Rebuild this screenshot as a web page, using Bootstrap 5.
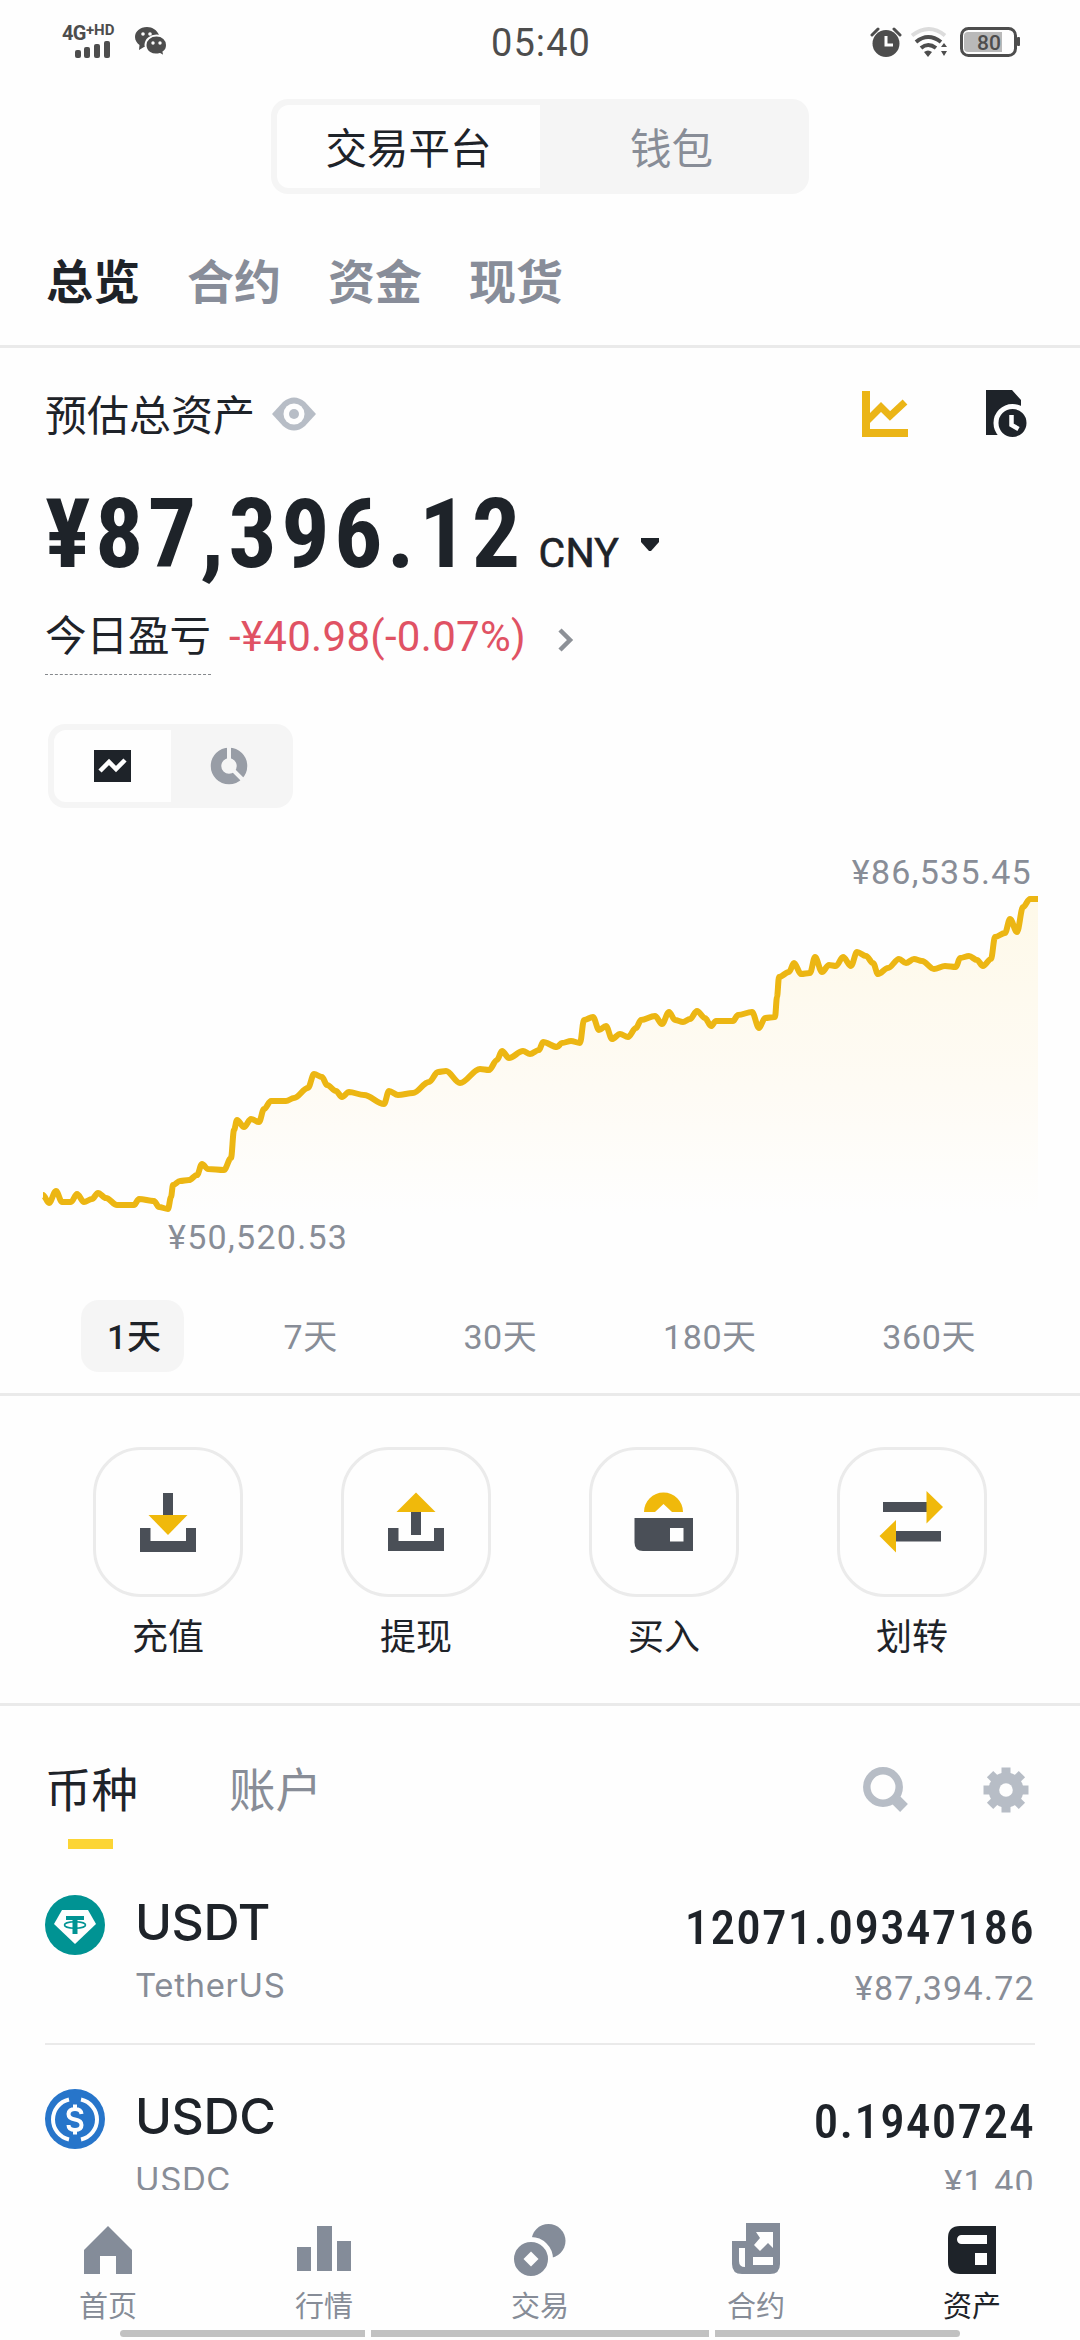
<!DOCTYPE html>
<html lang="zh-CN">
<head>
<meta charset="utf-8">
<meta name="viewport" content="width=device-width, initial-scale=1">
<title>资产</title>
<link href="https://cdn.jsdelivr.net/npm/bootstrap@5.3.0/dist/css/bootstrap.min.css" rel="stylesheet">
<style>
:root{--ink:#1e2329;--muted:#888d97;--icon:#b7bdc6;--gold:#f0b90b;--slate:#4a4f57;--line:#eaeaea;--soft:#f5f5f5}
body{background:#fefefe;color:var(--ink);font-family:Roboto,"Noto Sans CJK SC",sans-serif;line-height:1}
svg{display:block;flex:none}
.app{width:1080px;height:2340px;overflow:hidden}
.fig{white-space:nowrap}
.slim{font-stretch:75%}
.dim{color:var(--muted)}
.statusbar{height:84px;padding:0 60px 0 62px;color:#4d4d4d}
.statusbar .clock{font-size:38px;letter-spacing:1.1px;padding-top:2px}
.net{font-size:20px;font-weight:700;height:15px;line-height:15px;letter-spacing:-.6px;white-space:nowrap}
.net sup{font-size:15px;top:-5px;line-height:0;letter-spacing:0}
.platform{width:538px;height:95px;margin-top:15px;padding:6px;border-radius:17px;background:var(--soft);font-size:41.5px}
.platform>div{padding-top:6px}
.platform>.on{background:#fefefe;border-radius:12px 0 0 12px}
.sections{height:154px;padding:25px 46px 0;gap:47px;border-bottom:3px solid var(--line);font-size:47px;font-weight:700;color:#888d99}
.sections .on{color:var(--ink)}
.estimate{height:132px;padding:0 52px 0 45px;font-size:42px}
.estimate>div{padding-top:6px}
.balance{height:100px;padding:4px 0 0 45px}
.total{font-size:96px;font-weight:700;line-height:100px;letter-spacing:4.3px}
.cny{font-size:41px;letter-spacing:.2px;margin-left:14px;-webkit-text-stroke:.6px}
.pnl{height:97px;padding-left:45px;font-size:41.5px}
.pnl .tip{border-bottom:1px dashed #85888c;height:66px;line-height:55px;margin-top:26px}
.pnl .loss{color:#e05264;font-size:42px;letter-spacing:.3px;margin:17px 0 0 18px}
.viewtoggle{width:245px;height:84px;margin:47px 0 0 48px;padding:6px;background:var(--soft);border-radius:17px}
.viewtoggle>.on{background:#fefefe;border-radius:12px 0 0 12px}
.chart{height:452px;margin-top:12px;position:relative}
.chart .tag{position:absolute;font-size:34px;letter-spacing:1.3px;line-height:34px}
.tag.hi{right:48px;top:35px}
.tag.lo{left:168px;top:400px}
.ranges{height:124px;padding:28px 104px 22px 81px;border-bottom:3px solid var(--line);font-size:34px;letter-spacing:.6px}
.ranges>div:not(.on){padding-top:3px}
.ranges .on{width:103px;height:72px;margin-right:-26px;padding:3px 0 0 26px;background:var(--soft);border-radius:18px;color:var(--ink);font-weight:500}
.actions{height:310px;padding:51px 93px 0;border-bottom:3px solid var(--line);font-size:36px}
.tile{width:150px;height:150px;border:3px solid #ebebeb;border-radius:48px}
.tile svg{margin:-3px}
.tile+div{margin-top:23px}
.holdings{height:484px;overflow:hidden;padding:0 45px}
.kinds{height:145px;font-size:46.5px}
.kinds .on{width:94px;height:145px;padding-top:62px;position:relative}
.kinds .on::after{content:"";position:absolute;left:23px;top:133px;width:45px;height:10px;background:#fcd535}
.asset{height:194px;padding-top:44px;border-bottom:2px solid var(--line)}
.asset .sym{font-family:Inter,Roboto,sans-serif;font-size:50px;font-weight:500;line-height:56px;letter-spacing:-.4px;margin-top:-1px}
.asset .nick{font-family:Inter,Roboto,sans-serif;font-size:33px;line-height:40px;margin-top:15px;letter-spacing:.6px}
.asset .amt{font-size:49px;font-weight:500;line-height:56px;letter-spacing:1.3px;padding-top:5px}
.asset .val{font-size:34px;line-height:40px;margin:12px 0 0;letter-spacing:1.3px}
.tabbar{height:140px;font-size:29px;color:#868c97;padding-top:32px}
.tabbar .on{color:var(--ink)}
.tabbar .label{margin-top:15px}
.gesture{height:7px;padding:0 120px;gap:6px}
.gesture i{background:#c1c1c1}
</style>
</head>
<body>
<div class="app d-flex flex-column">
  <header class="statusbar d-flex align-items-center justify-content-between">
    <div class="d-flex align-items-center" style="width:240px">
      <div style="width:64px">
        <div class="net">4G<sup>+HD</sup></div>
        <svg width="60" height="17" viewBox="0 0 60 17" fill="#4d4d4d"><rect x="13" y="9" width="6" height="8" rx="2"/><rect x="22" y="6" width="6" height="11" rx="2"/><rect x="32" y="3" width="6" height="14" rx="2"/><rect x="42" y="0" width="6" height="17" rx="2"/></svg>
      </div>
      <svg class="ms-2" width="40" height="32" viewBox="0 0 40 32"><path d="M13 1C6 1 1 5.500 1 11c0 3.500 2 6 4.500 8L5 24l5-3h5L25 9C23 4 18.500 1 13 1z" fill="#4d4d4d"/><path d="M22.500 9.500c6 0 10.500 4 10.500 9.500 0 3-1.200 5.500-3.500 7l1 4.500-4.500-2.500c-8 2-14.500-2-14.500-9 0-5.500 5-9.500 11-9.500z" fill="#4d4d4d" stroke="#fefefe" stroke-width="2"/><g fill="#fefefe"><circle cx="9" cy="8" r="1.800"/><circle cx="16" cy="8" r="1.800"/><circle cx="19" cy="17" r="1.700"/><circle cx="26" cy="17" r="1.700"/></g></svg>
    </div>
    <div class="clock fig">05:40</div>
    <div class="d-flex align-items-center justify-content-end" style="width:240px">
      <svg width="32" height="32" viewBox="0 0 32 32"><circle cx="16" cy="17.500" r="13.500" fill="#4d4d4d"/><path d="M2 9l6-6M24 3l6 6" stroke="#4d4d4d" stroke-width="3" stroke-linecap="round"/><path d="M16 10v9h7" fill="none" stroke="#fefefe" stroke-width="3"/></svg>
      <svg class="ms-2" width="42" height="32" viewBox="0 0 42 32" fill="none" stroke-width="4"><path d="M2 9.500q17-13 33 0" stroke="#dcdcdc"/><path d="M6 16q12-10 25 0M11 22q7-6 15 0" stroke="#4d4d4d"/><path d="M14 26q4-3 8 0l-4 5zM31 21l3-4 3 4zM31 25h6l-3 5z" fill="#4d4d4d"/></svg>
      <svg class="ms-2" width="60" height="30" viewBox="0 0 60 30"><rect x="1.500" y="1.500" width="54" height="27" rx="7" fill="none" stroke="#4d4d4d" stroke-width="3"/><path d="M8 5h34v20H8q-4 0-4-4V9q0-4 4-4z" fill="#b9b9b9"/><rect x="57" y="10" width="3" height="9" rx="1" fill="#4d4d4d"/><text x="29" y="22.500" text-anchor="middle" font-family="Roboto" font-size="21" font-weight="500" fill="#4d4d4d">80</text></svg>
    </div>
  </header>

  <div class="platform d-flex mx-auto flex-shrink-0">
    <div class="on w-50 d-flex align-items-center justify-content-center">交易平台</div>
    <div class="dim w-50 d-flex align-items-center justify-content-center">钱包</div>
  </div>

  <nav class="sections d-flex align-items-center flex-shrink-0"><div class="on">总览</div><div>合约</div><div>资金</div><div>现货</div></nav>

  <section class="flex-shrink-0">
    <div class="estimate d-flex align-items-center">
      <div>预估总资产</div>
      <svg class="ms-3" width="46" height="34" viewBox="0 0 46 34"><path d="M1 17L12 5q11-9 22 0l11 12-11 12q-11 9-22 0z" fill="#b7bdc6"/><circle cx="23" cy="17" r="10.500" fill="#fefefe"/><circle cx="23" cy="17" r="5" fill="#b7bdc6"/></svg>
      <svg class="ms-auto" width="46" height="46" viewBox="0 0 46 46" fill="none" stroke="#ebb517"><path d="M4 0v42h42" stroke-width="8"/><path d="M5 30L19 16l9 9 15-14" stroke-width="7"/></svg>
      <svg style="margin-left:78px" width="42" height="48" viewBox="0 0 42 48"><path d="M0 0h26l9 10v8H20v27H0z" fill="#1e2329"/><circle cx="26.500" cy="33" r="16.500" fill="#1e2329" stroke="#fefefe" stroke-width="5"/><path d="M25.500 25v10l7 4" fill="none" stroke="#fefefe" stroke-width="4.500"/></svg>
    </div>
    <div class="balance d-flex align-items-baseline">
      <div class="total fig slim">¥87,396.12</div><div class="cny fig">CNY</div>
      <svg style="margin-left:21px;transform:translateY(-15px)" width="20" height="14" viewBox="0 0 20 14"><path d="M1 0h18v4l-8 9h-2L1 4z" fill="#1e2329"/></svg>
    </div>
    <div class="pnl d-flex align-items-center">
      <div class="tip">今日盈亏</div><div class="loss fig">-¥40.98(-0.07%)</div>
      <svg style="margin:22px 0 0 31px" width="18" height="26" viewBox="0 0 18 26"><path d="M3 3l10 10L3 23" fill="none" stroke="#8d9197" stroke-width="4.500"/></svg>
    </div>
    <div class="viewtoggle d-flex">
      <div class="on w-50 d-flex align-items-center justify-content-center"><svg width="37" height="32" viewBox="0 0 37 32"><path d="M0 0h37v32H0z" fill="#1e2329"/><path d="M6 21l9-9 7 7 9-9" fill="none" stroke="#fefefe" stroke-width="4.500"/></svg></div>
      <div class="w-50 d-flex align-items-center justify-content-center"><svg width="38" height="38" viewBox="0 0 38 38"><circle cx="19" cy="19" r="13" fill="none" stroke="#989da6" stroke-width="10.500"/><path d="M19 13V0M23 23l11 11" stroke="#f5f5f5" stroke-width="4"/></svg></div>
    </div>
    <div class="chart">
      <svg width="1080" height="452" viewBox="0 0 1080 452">
        <defs><linearGradient id="fade" x1="0" y1="79" x2="0" y2="394" gradientUnits="userSpaceOnUse"><stop offset="0" stop-color="#fef9e9"/><stop offset=".6" stop-color="#fefbf4"/><stop offset="1" stop-color="#fefefe"/></linearGradient></defs>
        <path id="area" fill="url(#fade)"/>
        <path id="trend" fill="none" stroke="#ecb613" stroke-width="6" stroke-linejoin="round"/>
      </svg>
      <div class="tag hi fig dim">¥86,535.45</div>
      <div class="tag lo fig dim">¥50,520.53</div>
    </div>
    <div class="ranges fig dim d-flex align-items-center justify-content-between"><div class="on d-flex align-items-center">1天</div><div>7天</div><div>30天</div><div>180天</div><div>360天</div></div>
  </section>

  <section class="actions d-flex justify-content-between text-center flex-shrink-0">
    <div><div class="tile"><svg width="150" height="150" viewBox="0 0 150 150"><path d="M70 46h10v24H70z" fill="#4a4f57"/><path d="M55.500 68h39L75 88z" fill="#f0b90b"/><path d="M47 81h10.500v13H93V81h10v24H47z" fill="#4a4f57"/></svg></div><div>充值</div></div>
    <div><div class="tile"><svg width="150" height="150" viewBox="0 0 150 150"><path d="M70 64h10v24H70z" fill="#4a4f57"/><path d="M55.500 65h39L75 45.500z" fill="#f0b90b"/><path d="M47 81h10.500v13H93V81h10v23H47z" fill="#4a4f57"/></svg></div><div>提现</div></div>
    <div><div class="tile"><svg width="150" height="150" viewBox="0 0 150 150"><path d="M55 65a19.500 19.500 0 0 1 39 0H83l-8.500-8L66 65z" fill="#f0b90b"/><path fill-rule="evenodd" d="M45.500 71H104v33H54q-8.500 0-8.500-8.500zM81 81v13.500h13.500V81z" fill="#4a4f57"/></svg></div><div>买入</div></div>
    <div><div class="tile"><svg width="150" height="150" viewBox="0 0 150 150"><path d="M46 55h46v10H46zM57 84h47v10.500H57z" fill="#4a4f57"/><path d="M89.500 44v32.500L106 60zM59 73v32.500L42.500 89z" fill="#f0b90b"/></svg></div><div>划转</div></div>
  </section>

  <section class="holdings flex-shrink-0">
    <div class="kinds d-flex">
      <div class="on">币种</div><div class="dim" style="margin-left:90px;padding-top:62px">账户</div>
      <svg class="ms-auto" style="margin-top:61px" width="46" height="46" viewBox="0 0 46 46" fill="none" stroke="#b7bdc6"><circle cx="20" cy="20" r="16.200" stroke-width="7.500"/><path d="M31 31l10 10" stroke-width="11"/></svg>
      <svg style="margin:61px 6px 0 74px" width="46" height="46" viewBox="-23 -23 46 46"><g fill="#b7bdc6"><path id="tooth" d="M-4.500-22.500h9v45h-9z"/><use href="#tooth" transform="rotate(45)"/><use href="#tooth" transform="rotate(90)"/><use href="#tooth" transform="rotate(135)"/><circle r="17.500"/></g><circle r="6.800" fill="#fefefe"/></svg>
    </div>
    <div class="asset d-flex">
      <svg width="60" height="60" viewBox="0 0 60 60"><circle cx="30" cy="30" r="30" fill="#009393"/><path d="M17 15h26l8 14-21 20L9 29z" fill="#fefefe"/><path d="M21 21h18v4h-6.500V39h-5V25H21z" fill="#009393"/><ellipse cx="30" cy="30" rx="10.500" ry="3.200" fill="none" stroke="#009393" stroke-width="1.600"/></svg>
      <div style="margin-left:30px"><div class="sym">USDT</div><div class="nick dim">TetherUS</div></div>
      <div class="ms-auto text-end"><div class="amt fig slim">12071.09347186</div><div class="val fig dim">¥87,394.72</div></div>
    </div>
    <div class="asset d-flex">
      <svg width="60" height="60" viewBox="0 0 60 60"><circle cx="30" cy="30" r="30" fill="#2775ca"/><g fill="none" stroke="#fefefe" stroke-width="4"><path d="M24 10.500a20.500 20.500 0 0 0 0 40M36 10.500a20.500 20.500 0 0 1 0 40"/><path d="M36.500 25q-.5-5-6.500-5t-6.500 5q0 4.500 6.500 5.500t6.500 5.500q0 5-6.500 5t-6.500-5M30 15.500v5M30 40.500v5"/></g></svg>
      <div style="margin-left:30px"><div class="sym">USDC</div><div class="nick dim">USDC</div></div>
      <div class="ms-auto text-end"><div class="amt fig slim">0.1940724</div><div class="val fig dim">¥1.40</div></div>
    </div>
  </section>

  <footer class="flex-shrink-0">
    <nav class="tabbar row g-0 text-center">
      <div class="col"><svg class="mx-auto" width="56" height="56" viewBox="0 0 56 56"><path d="M4 28L28 4l24 24v24H36V34H20v18H4z" fill="#848c99"/></svg><div class="label">首页</div></div>
      <div class="col"><svg class="mx-auto" width="56" height="56" viewBox="0 0 56 56"><path d="M1 25h14v24H1zM21 4h15v45H21zM41 19h14v30H41z" fill="#848c99"/></svg><div class="label">行情</div></div>
      <div class="col"><svg class="mx-auto" width="56" height="56" viewBox="0 0 56 56"><circle cx="36.500" cy="19" r="17" fill="#848c99"/><circle cx="19" cy="37" r="19.500" fill="#848c99" stroke="#fefefe" stroke-width="5"/><path d="M19 29.500l7.500 7.500-7.500 7.500-7.500-7.500z" fill="#fefefe"/></svg><div class="label">交易</div></div>
      <div class="col"><svg class="mx-auto" width="56" height="56" viewBox="0 0 56 56"><path d="M18 1h34v41q0 10-10 10H14Q4 52 4 42V19h14z" fill="#848c99"/><path d="M28 10h17v16l-5-5-8 8-6-6 6-7zM25 35h20v8H25zM11 26h6v19q-6 0-6-6z" fill="#fefefe"/></svg><div class="label">合约</div></div>
      <div class="col on"><svg class="mx-auto" width="56" height="56" viewBox="0 0 56 56"><path d="M16 4h36v48H16Q4 52 4 40V16Q4 4 16 4z" fill="#1e2329"/><path d="M17.500 13H43v9H17.500a4.500 4.500 0 0 1 0-9zM31 31h12v12H31z" fill="#fefefe"/></svg><div class="label">资产</div></div>
    </nav>
    <div class="gesture d-flex"><i class="rounded-start-pill" style="width:245px"></i><i style="width:338px"></i><i class="rounded-end-pill" style="width:245px"></i></div>
  </footer>
</div>
<script src="https://cdn.jsdelivr.net/npm/bootstrap@5.3.0/dist/js/bootstrap.bundle.min.js"></script>
<script>
const points = [43,375,49,383,56,371,62,382,71,382,77,374,84,382,92,379,98,373,106,378,117,385,134,385,139,379,154,381,159,387,168,389,171,377,173,365,180,361,189,360,197,355,202,344,208,349,224,350,231,338,234,310,237,300,244,307,251,299,259,302,264,289,271,281,286,281,294,278,308,268,314,254,322,257,327,265,336,271,342,277,349,272,364,275,384,284,389,271,398,275,413,273,429,262,438,252,446,251,460,263,480,249,489,250,497,240,502,231,509,238,523,231,530,234,539,230,543,222,557,227,562,223,571,221,580,223,584,200,593,197,599,210,606,206,612,219,620,214,628,217,636,208,641,200,655,196,662,204,669,192,675,200,683,202,690,199,697,191,705,198,711,206,716,201,733,201,738,195,752,192,759,208,765,198,775,197,777,177,779,157,789,152,794,143,801,154,810,153,815,137,822,152,829,145,836,146,843,137,851,146,857,132,866,136,873,143,878,154,888,148,899,139,906,143,914,139,922,141,934,149,945,146,956,147,960,138,969,136,977,140,983,146,991,139,995,117,1005,113,1010,99,1017,112,1023,87,1030,79,1038,79];
const p = [];
for (let i = 0; i < points.length; i += 2) p.push([points[i], points[i + 1]]);
let d = `M${p[0]}`;
for (let i = 1; i < p.length; i++) {
  const a = p[i - 1], b = p[i], k = (b[0] - a[0]) * 0.35;
  d += `C${a[0] + k} ${a[1]} ${b[0] - k} ${b[1]} ${b}`;
}
document.getElementById('trend').setAttribute('d', d);
document.getElementById('area').setAttribute('d', d + 'V394H43Z');
</script>
</body>
</html>
